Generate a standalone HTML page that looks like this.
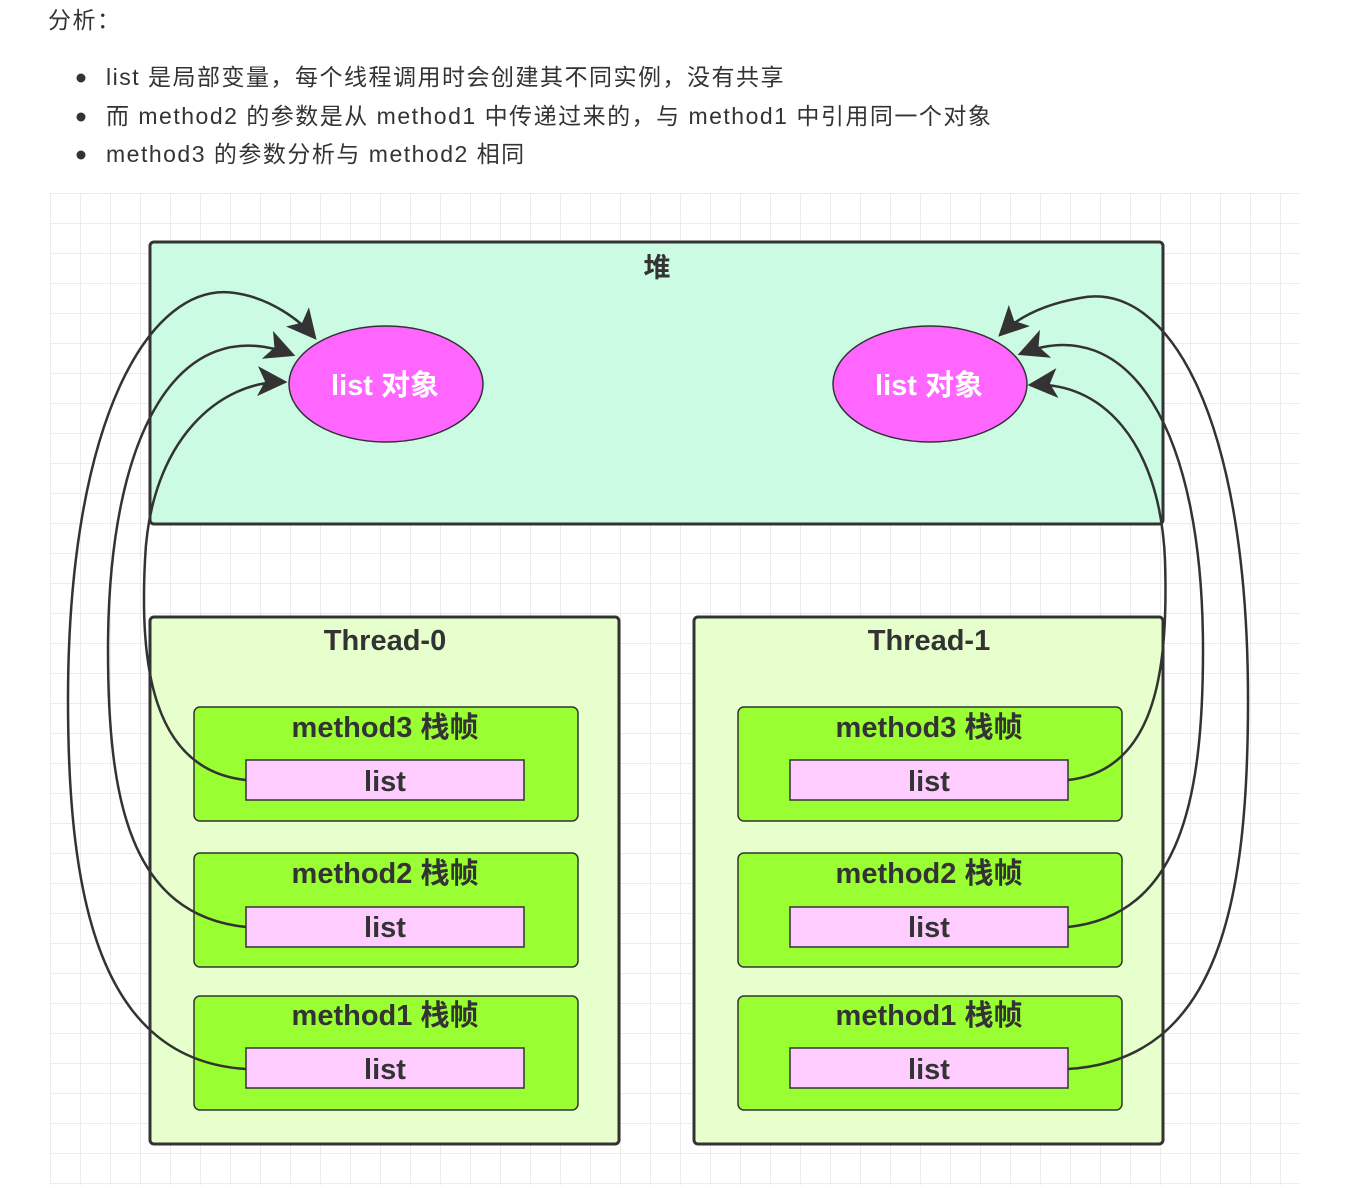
<!DOCTYPE html>
<html><head><meta charset="utf-8"><style>
html,body{margin:0;padding:0;background:#fff;width:1351px;height:1188px;overflow:hidden}
svg{display:block}
.t{font-family:"Liberation Sans","Noto Sans CJK SC",sans-serif;fill:#333;font-size:23px;letter-spacing:1.5px}
.b{font-family:"Liberation Sans","Noto Sans CJK SC",sans-serif;font-weight:bold;fill:#333;font-size:29px;text-anchor:middle}
</style></head><body>
<svg width="1351" height="1188" viewBox="0 0 1351 1188" xmlns="http://www.w3.org/2000/svg">
<defs>
<pattern id="g" x="50" y="193" width="30" height="30" patternUnits="userSpaceOnUse">
<path d="M0 0H30M0 0V30" stroke="#e6e6e6" stroke-width="1.5" fill="none"/>
</pattern>
<marker id="ar" viewBox="0 0 12 12" refX="11" refY="6" markerWidth="30" markerHeight="30" markerUnits="userSpaceOnUse" orient="auto">
<path d="M0 0L12 6L0 12L3 6Z" fill="#333"/>
</marker>
</defs>
<text class="t" x="48" y="28">分析：</text>
<circle cx="81" cy="78" r="4.5" fill="#333"/><text class="t" x="106" y="85">list 是局部变量，每个线程调用时会创建其不同实例，没有共享</text>
<circle cx="81" cy="117" r="4.5" fill="#333"/><text class="t" x="106" y="124">而 method2 的参数是从 method1 中传递过来的，与 method1 中引用同一个对象</text>
<circle cx="81" cy="155" r="4.5" fill="#333"/><text class="t" x="106" y="162">method3 的参数分析与 method2 相同</text>

<rect x="50" y="193" width="1250" height="992" fill="url(#g)"/>

<rect x="150" y="242" width="1013" height="282" rx="4" fill="#ccfbe3" stroke="#333" stroke-width="3"/>
<text class="b" x="657" y="277" style="font-size:27px">堆</text>
<ellipse cx="386" cy="384" rx="97" ry="58" fill="#ff66ff" stroke="#333" stroke-width="1.5"/>
<text class="b" x="385" y="395" style="fill:#fff">list 对象</text>
<ellipse cx="930" cy="384" rx="97" ry="58" fill="#ff66ff" stroke="#333" stroke-width="1.5"/>
<text class="b" x="929" y="395" style="fill:#fff">list 对象</text>

<g stroke="#333" stroke-width="3">
<rect x="150" y="617" width="469" height="527" rx="4" fill="#e6ffcc"/>
<rect x="694" y="617" width="469" height="527" rx="4" fill="#e6ffcc"/>
</g>
<text class="b" x="385" y="650">Thread-0</text>
<text class="b" x="929" y="650">Thread-1</text>

<g stroke="#333" stroke-width="1.5">
<rect x="194" y="707" width="384" height="114" rx="6" fill="#99ff33"/>
<rect x="194" y="853" width="384" height="114" rx="6" fill="#99ff33"/>
<rect x="194" y="996" width="384" height="114" rx="6" fill="#99ff33"/>
<rect x="738" y="707" width="384" height="114" rx="6" fill="#99ff33"/>
<rect x="738" y="853" width="384" height="114" rx="6" fill="#99ff33"/>
<rect x="738" y="996" width="384" height="114" rx="6" fill="#99ff33"/>
<rect x="246" y="760" width="278" height="40" fill="#ffccff"/>
<rect x="246" y="907" width="278" height="40" fill="#ffccff"/>
<rect x="246" y="1048" width="278" height="40" fill="#ffccff"/>
<rect x="790" y="760" width="278" height="40" fill="#ffccff"/>
<rect x="790" y="907" width="278" height="40" fill="#ffccff"/>
<rect x="790" y="1048" width="278" height="40" fill="#ffccff"/>
</g>
<g>
<text class="b" x="385" y="737">method3 栈帧</text>
<text class="b" x="385" y="883">method2 栈帧</text>
<text class="b" x="385" y="1025">method1 栈帧</text>
<text class="b" x="929" y="737">method3 栈帧</text>
<text class="b" x="929" y="883">method2 栈帧</text>
<text class="b" x="929" y="1025">method1 栈帧</text>
<text class="b" x="385" y="791">list</text>
<text class="b" x="385" y="937">list</text>
<text class="b" x="385" y="1079">list</text>
<text class="b" x="929" y="791">list</text>
<text class="b" x="929" y="937">list</text>
<text class="b" x="929" y="1079">list</text>
</g>

<g fill="none" stroke="#333" stroke-width="2.5">
<path d="M246 780 C150 770 140 660 145 560 C150 440 220 380 285 382" marker-end="url(#ar)"/>
<path d="M246 927 C130 915 108 800 108 650 C108 430 180 310 293 355" marker-end="url(#ar)"/>
<path d="M246 1069 C100 1060 68 900 68 700 C68 420 150 280 235 293 C270 298 300 320 315 338" marker-end="url(#ar)"/>
<path d="M1068 780 C1160 770 1168 660 1165 560 C1160 440 1100 380 1030 385" marker-end="url(#ar)"/>
<path d="M1068 927 C1180 915 1203 800 1203 650 C1203 430 1130 310 1020 354" marker-end="url(#ar)"/>
<path d="M1068 1069 C1220 1060 1248 900 1248 700 C1248 420 1170 280 1080 298 C1040 305 1015 320 1000 335" marker-end="url(#ar)"/>
</g>
</svg>
</body></html>
